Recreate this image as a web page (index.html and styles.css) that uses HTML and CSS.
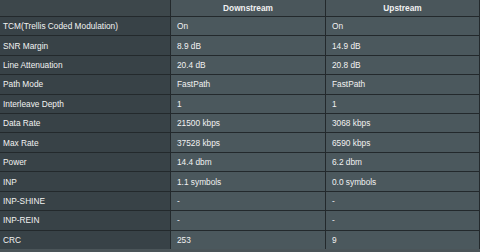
FILE: index.html
```html
<!DOCTYPE html>
<html>
<head>
<meta charset="utf-8">
<link rel="stylesheet" href="styles.css">
</head>
<body>
<div class="table">
  <div class="hd first"></div>
  <div class="hd">Downstream</div>
  <div class="hd">Upstream</div>

  <div class="th">TCM(Trellis Coded Modulation)</div><div class="td">On</div><div class="td">On</div>
  <div class="th">SNR Margin</div><div class="td">8.9 dB</div><div class="td">14.9 dB</div>
  <div class="th">Line Attenuation</div><div class="td">20.4 dB</div><div class="td">20.8 dB</div>
  <div class="th">Path Mode</div><div class="td">FastPath</div><div class="td">FastPath</div>
  <div class="th">Interleave Depth</div><div class="td">1</div><div class="td">1</div>
  <div class="th">Data Rate</div><div class="td">21500 kbps</div><div class="td">3068 kbps</div>
  <div class="th">Max Rate</div><div class="td">37528 kbps</div><div class="td">6590 kbps</div>
  <div class="th">Power</div><div class="td">14.4 dbm</div><div class="td">6.2 dbm</div>
  <div class="th">INP</div><div class="td">1.1 symbols</div><div class="td">0.0 symbols</div>
  <div class="th">INP-SHINE</div><div class="td">-</div><div class="td">-</div>
  <div class="th">INP-REIN</div><div class="td">-</div><div class="td">-</div>
  <div class="th">CRC</div><div class="td">253</div><div class="td">9</div>
</div>
</body>
</html>
```
FILE: styles.css
```css
html, body {
  margin: 0;
  padding: 0;
  background: #4b5559;
  width: 480px;
  height: 252px;
  overflow: hidden;
}
.table {
  display: grid;
  grid-template-columns: 170px 154px 153px;
  grid-template-rows: 16px repeat(12, 1fr);
  gap: 1px;
  height: 249px;
  width: 479px;
  padding-right: 1px;
  background: #23292c;
  font-family: "Liberation Sans", Arial, sans-serif;
  font-size: 8.3px;
  color: #f2f2f2;
}
.hd {
  background: #4a565b;
  font-weight: bold;
  display: flex;
  align-items: center;
  justify-content: center;
}
.hd.first {
  background: #3d474b;
}
.th {
  background: #384247;
  display: flex;
  align-items: center;
  padding-left: 3px;
}
.td {
  background: #4b585d;
  display: flex;
  align-items: center;
  padding-left: 6px;
}
```
